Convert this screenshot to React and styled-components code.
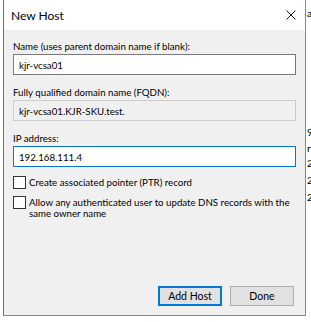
import React from 'react'
import styled, { createGlobalStyle } from 'styled-components'

const GlobalStyle = createGlobalStyle`
    body {
        margin: 0;
        background: #ffffff;
        overflow: hidden;
        font-family: Lato, "Noto Sans", sans-serif;
    }
`

const Screen = styled.div`
    position: relative;
    width: 311px;
    height: 322px;
    overflow: hidden;
    background: #ffffff;
`

// bits of the window that sits behind the dialog
const BehindText = styled.span`
    position: absolute;
    left: 307px;
    font-size: 10px;
    line-height: 13px;
    color: #000;
    white-space: nowrap;
`

const Dialog = styled.div`
    position: relative;
    margin-left: 3px;
    width: 303px;
    height: 316px;
    display: flex;
    flex-direction: column;
    border-left: 1px solid #707070;
    border-right: 1px solid #8a8a8a;
    border-bottom: 1px solid #8a8a8a;
    box-sizing: border-box;
    font-family: Lato, "Noto Sans", sans-serif;
    font-size: 9.7px;
    color: #000;
`

const TitleBar = styled.div`
    height: 30px;
    flex: none;
    background: #ffffff;
    display: flex;
    align-items: center;
    justify-content: space-between;
    padding: 0 9px 0 7px;
    font-size: 12px;
`

const Body = styled.div`
    flex: 1;
    background: #f0f0f0;
    display: flex;
    flex-direction: column;
    padding: 10px 9px 9px 9px;
`

const Label = styled.div`
    line-height: 13px;
    margin-bottom: 1px;
    white-space: nowrap;
`

const Field = styled.div`
    height: 21px;
    box-sizing: border-box;
    display: flex;
    align-items: center;
    padding: 0 5px;
    border: 1px solid ${p => (p.$focused ? '#0078d7' : p.$readOnly ? '#cccccc' : '#7a7a7a')};
    background: ${p => (p.$readOnly ? '#f0f0f0' : '#ffffff')};
    margin-bottom: 11px;
`

const CheckRow = styled.label`
    display: flex;
    align-items: flex-start;
    gap: 3px;
    line-height: 11px;
    white-space: nowrap;
    margin-top: ${p => p.$top || 0}px;
`

const Box = styled.span`
    flex: none;
    width: 13px;
    height: 13px;
    box-sizing: border-box;
    border: 1px solid #333333;
    background: #ffffff;
`

const CheckText = styled.span`
    padding-top: 1px;
`

const Footer = styled.div`
    margin-top: auto;
    display: flex;
    justify-content: flex-end;
    gap: 8px;
    padding-right: 2px;
`

const Button = styled.button`
    width: 64px;
    height: 20px;
    box-sizing: border-box;
    padding: 0;
    font-family: inherit;
    font-size: 10.5px;
    color: #000;
    background: #e1e1e1;
    border: 1px solid ${p => (p.$primary ? '#0078d7' : '#adadad')};
    box-shadow: ${p => (p.$primary ? 'inset 0 0 0 1px #0078d7' : 'none')};
`

const CloseIcon = () => (
    <svg width="10" height="10" viewBox="0 0 10 10">
        <path d="M0.5 0.5 L9.5 9.5 M9.5 0.5 L0.5 9.5" stroke="#111" strokeWidth="1" fill="none" />
    </svg>
)

const App = () => {
    return (
        <Screen>
            <GlobalStyle />
            <BehindText style={{ top: 7 }}>at</BehindText>
            <BehindText style={{ top: 126 }}>9</BehindText>
            <BehindText style={{ top: 142 }}>r-</BehindText>
            <BehindText style={{ top: 157 }}>2</BehindText>
            <BehindText style={{ top: 174 }}>2</BehindText>
            <BehindText style={{ top: 191 }}>2</BehindText>
            <Dialog>
                <TitleBar>
                    <span>New Host</span>
                    <CloseIcon />
                </TitleBar>
                <Body>
                    <Label>Name (uses parent domain name if blank):</Label>
                    <Field>kjr-vcsa01</Field>
                    <Label>Fully qualified domain name (FQDN):</Label>
                    <Field $readOnly>kjr-vcsa01.KJR-SKU.test.</Field>
                    <Label>IP address:</Label>
                    <Field $focused>192.168.111.4</Field>
                    <CheckRow $top={-2}>
                        <Box />
                        <CheckText>Create associated pointer (PTR) record</CheckText>
                    </CheckRow>
                    <CheckRow $top={7}>
                        <Box />
                        <CheckText>
                            Allow any authenticated user to update DNS records with the
                            <br />
                            same owner name
                        </CheckText>
                    </CheckRow>
                    <Footer>
                        <Button $primary>Add Host</Button>
                        <Button>Done</Button>
                    </Footer>
                </Body>
            </Dialog>
        </Screen>
    )
}

export default App
